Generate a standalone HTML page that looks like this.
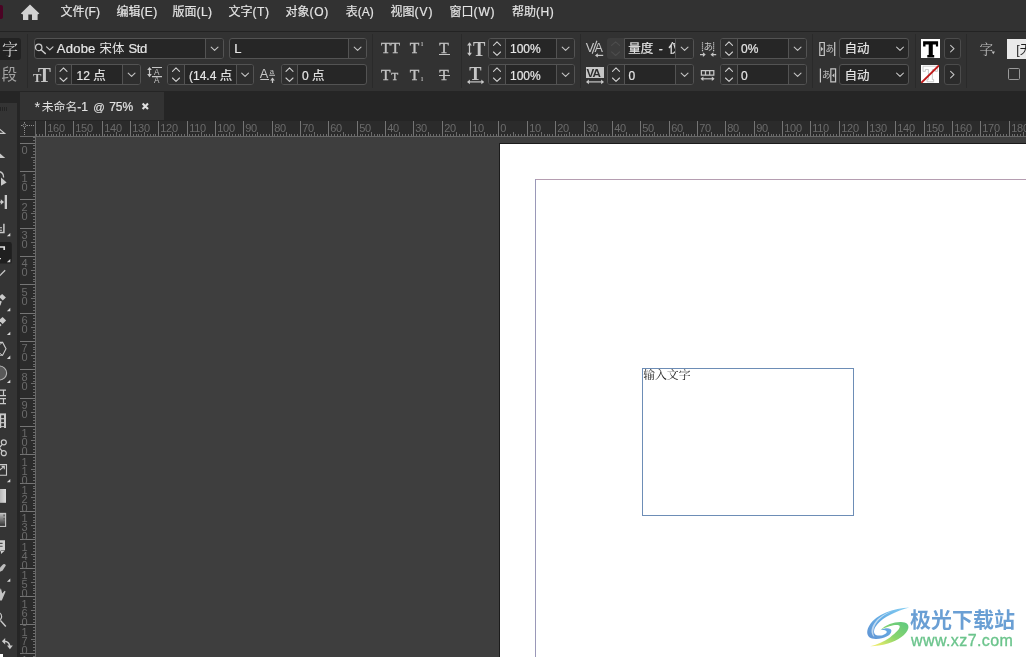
<!DOCTYPE html><html lang="zh"><head><meta charset="utf-8"><title>InDesign</title><style>
*{box-sizing:border-box;margin:0;padding:0}
html,body{width:1026px;height:657px;overflow:hidden;background:#323232}
body{position:relative;font-family:"Liberation Sans","Noto Sans CJK SC",sans-serif;font-size:12px;color:#dcdcdc}
.lb{position:absolute;white-space:nowrap;font-family:"Liberation Sans","Noto Sans CJK SC",sans-serif}
.jp{font-family:"Liberation Sans","Noto Sans CJK JP",sans-serif}
.sf{font-family:"Liberation Serif","Noto Serif CJK SC",serif}
.fld{position:absolute;border:1px solid #535353;border-radius:3px;background:#262626;overflow:hidden}
.fld .st{position:absolute;left:0;top:0;bottom:0;background:#2e2e2e;border-right:1px solid #535353}
.fld .dd{position:absolute;right:0;top:0;bottom:0;background:#2e2e2e;border-left:1px solid #535353}
.vsep{position:absolute;width:1px;background:#2a2a2a;top:34px;height:54px}
svg{display:block}
.lb svg{display:inline-block}
</style></head><body><div id="app" style="position:absolute;left:0;top:0;width:1026px;height:657px;overflow:hidden;will-change:transform"><div class="" style="position:absolute;left:0px;top:0px;width:1026px;height:31px;background:#323232"></div>
<div class="" style="position:absolute;left:0px;top:31px;width:1026px;height:1px;background:#232323"></div>
<div class="" style="position:absolute;left:0px;top:5px;width:3px;height:14px;background:#4b0324;border-radius:0 2px 2px 0"></div>
<svg style="position:absolute;left:20px;top:3px;" width="21" height="19" viewBox="0 0 21 19"><path d="M10 1.6 L19.4 10.6 L17.6 11.6 L17.6 17.1 L12 17.1 L12 11.4 L8.3 11.4 L8.3 17.1 L3 17.1 L3 11.6 L0.8 10.6 Z" fill="#d2d2d2"/></svg>
<div class="lb " style="left:60.5px;top:4.9px;font-size:12px;line-height:14px;color:#e4e4e4;-webkit-text-stroke:0.2px #e4e4e4;">文件<span style="letter-spacing:0.03px">(F)</span></div>
<div class="lb " style="left:116.5px;top:4.9px;font-size:12px;line-height:14px;color:#e4e4e4;-webkit-text-stroke:0.2px #e4e4e4;">编辑<span style="letter-spacing:0.33px">(E)</span></div>
<div class="lb " style="left:172.5px;top:4.9px;font-size:12px;line-height:14px;color:#e4e4e4;-webkit-text-stroke:0.2px #e4e4e4;">版面<span style="letter-spacing:0.44px">(L)</span></div>
<div class="lb " style="left:228.5px;top:4.9px;font-size:12px;line-height:14px;color:#e4e4e4;-webkit-text-stroke:0.2px #e4e4e4;">文字<span style="letter-spacing:0.56px">(T)</span></div>
<div class="lb " style="left:285.5px;top:4.9px;font-size:12px;line-height:14px;color:#e4e4e4;-webkit-text-stroke:0.2px #e4e4e4;">对象<span style="letter-spacing:0.69px">(O)</span></div>
<div class="lb " style="left:345.8px;top:4.9px;font-size:12px;line-height:14px;color:#e4e4e4;-webkit-text-stroke:0.2px #e4e4e4;">表<span style="letter-spacing:0px">(A)</span></div>
<div class="lb " style="left:390.5px;top:4.9px;font-size:12px;line-height:14px;color:#e4e4e4;-webkit-text-stroke:0.2px #e4e4e4;">视图<span style="letter-spacing:1px">(V)</span></div>
<div class="lb " style="left:449.5px;top:4.9px;font-size:12px;line-height:14px;color:#e4e4e4;-webkit-text-stroke:0.2px #e4e4e4;">窗口<span style="letter-spacing:0.89px">(W)</span></div>
<div class="lb " style="left:511.9px;top:4.9px;font-size:12px;line-height:14px;color:#e4e4e4;-webkit-text-stroke:0.2px #e4e4e4;">帮助<span style="letter-spacing:0.61px">(H)</span></div>
<div class="fld" style="left:34px;top:38px;width:190px;height:21px;"><div class="dd" style="width:18px"><svg style="position:absolute;left:0px;top:0px;" width="17" height="19" viewBox="0 0 17 19"><path d="M5.2 8.05 L8.6 11.35 L12 8.05" fill="none" stroke="#c4c4c4" stroke-width="1.1" stroke-linecap="round" stroke-linejoin="round"/></svg></div></div>
<div class="lb " style="left:56.8px;top:41.3px;font-size:13px;line-height:15px;color:#e6e6e6;-webkit-text-stroke:0.2px #e6e6e6;"><span style="letter-spacing:0.24px">Adobe</span></div>
<div class="lb " style="left:99.6px;top:41.3px;font-size:13px;line-height:15px;color:#e6e6e6;"><span style="font-size:12.4px">宋体</span></div>
<div class="lb " style="left:128.5px;top:41.3px;font-size:13px;line-height:15px;color:#e6e6e6;-webkit-text-stroke:0.2px #e6e6e6;"><span style="letter-spacing:-0.44px">Std</span></div>
<div class="fld" style="left:229px;top:38px;width:138px;height:21px;"><div class="dd" style="width:18px"><svg style="position:absolute;left:0px;top:0px;" width="17" height="19" viewBox="0 0 17 19"><path d="M5.2 8.05 L8.6 11.35 L12 8.05" fill="none" stroke="#c4c4c4" stroke-width="1.1" stroke-linecap="round" stroke-linejoin="round"/></svg></div></div><div class="lb " style="left:234.2px;top:41.3px;font-size:13px;line-height:15px;color:#e6e6e6;-webkit-text-stroke:0.2px #e6e6e6;">L</div>
<div class="fld" style="left:488px;top:38px;width:87px;height:21px;"><div class="st" style="width:17px;"><svg style="position:absolute;left:0px;top:0px;" width="16" height="19" viewBox="0 0 16 19"><path d="M4.5 6.3 L8 2.9 L11.5 6.3" fill="none" stroke="#cfcfcf" stroke-width="1.1" stroke-linecap="round" stroke-linejoin="round"/><path d="M4.5 13 L8 16.4 L11.5 13" fill="none" stroke="#cfcfcf" stroke-width="1.1" stroke-linecap="round" stroke-linejoin="round"/></svg></div><div class="dd" style="width:18px"><svg style="position:absolute;left:0px;top:0px;" width="17" height="19" viewBox="0 0 17 19"><path d="M5.2 8.05 L8.6 11.35 L12 8.05" fill="none" stroke="#c4c4c4" stroke-width="1.1" stroke-linecap="round" stroke-linejoin="round"/></svg></div></div><div class="lb " style="left:510px;top:42.3px;font-size:12px;line-height:14px;color:#e6e6e6;-webkit-text-stroke:0.2px #e6e6e6;">100%</div>
<div class="" style="position:absolute;left:607px;top:38px;width:18px;height:21px;background:#3c3c3c;border-radius:3px 0 0 3px"><svg style="position:absolute;left:0px;top:0px;" width="17" height="21" viewBox="0 0 17 21"><path d="M4.6 7.4 L8.6 3.8 L12.6 7.4" fill="none" stroke="#4d4d4d" stroke-width="1.1" stroke-linecap="round" stroke-linejoin="round"/><path d="M4.6 13.9 L8.6 17.5 L12.6 13.9" fill="none" stroke="#4d4d4d" stroke-width="1.1" stroke-linecap="round" stroke-linejoin="round"/></svg></div>
<div class="fld" style="left:624px;top:38px;width:70px;height:21px;border-radius:0 3px 3px 0;"><div class="dd" style="width:18px"><svg style="position:absolute;left:0px;top:0px;" width="17" height="19" viewBox="0 0 17 19"><path d="M5.2 8.05 L8.6 11.35 L12 8.05" fill="none" stroke="#c4c4c4" stroke-width="1.1" stroke-linecap="round" stroke-linejoin="round"/></svg></div></div><div class="lb " style="left:628.3px;top:42.3px;font-size:12px;line-height:14px;color:#e6e6e6;word-spacing:2.2px;width:46.5px;overflow:hidden;-webkit-text-stroke:0.2px #e6e6e6;"><span style="font-size:12.5px">量度</span> - <span style="font-size:12.5px">仅</span></div>
<div class="fld" style="left:720px;top:38px;width:87px;height:21px;"><div class="st" style="width:17px;"><svg style="position:absolute;left:0px;top:0px;" width="16" height="19" viewBox="0 0 16 19"><path d="M4.5 6.3 L8 2.9 L11.5 6.3" fill="none" stroke="#cfcfcf" stroke-width="1.1" stroke-linecap="round" stroke-linejoin="round"/><path d="M4.5 13 L8 16.4 L11.5 13" fill="none" stroke="#cfcfcf" stroke-width="1.1" stroke-linecap="round" stroke-linejoin="round"/></svg></div><div class="dd" style="width:18px"><svg style="position:absolute;left:0px;top:0px;" width="17" height="19" viewBox="0 0 17 19"><path d="M5.2 8.05 L8.6 11.35 L12 8.05" fill="none" stroke="#c4c4c4" stroke-width="1.1" stroke-linecap="round" stroke-linejoin="round"/></svg></div></div><div class="lb " style="left:741px;top:42.3px;font-size:12px;line-height:14px;color:#e6e6e6;-webkit-text-stroke:0.2px #e6e6e6;">0%</div>
<div class="fld" style="left:839px;top:38px;width:70px;height:21px;"><svg style="position:absolute;left:55.5px;top:0px;" width="8" height="19" viewBox="0 0 8 19"><path d="M0.6 8.05 L4 11.35 L7.4 8.05" fill="none" stroke="#c4c4c4" stroke-width="1.1" stroke-linecap="round" stroke-linejoin="round"/></svg></div><div class="lb " style="left:844.5px;top:42.3px;font-size:12px;line-height:14px;color:#e6e6e6;-webkit-text-stroke:0.2px #e6e6e6;"><span style="font-size:12.5px">自动</span></div>
<div class="fld" style="left:55px;top:64px;width:86px;height:21px;"><div class="st" style="width:16px;"><svg style="position:absolute;left:0px;top:0px;" width="15" height="19" viewBox="0 0 15 19"><path d="M4 6.3 L7.5 2.9 L11 6.3" fill="none" stroke="#cfcfcf" stroke-width="1.1" stroke-linecap="round" stroke-linejoin="round"/><path d="M4 13 L7.5 16.4 L11 13" fill="none" stroke="#cfcfcf" stroke-width="1.1" stroke-linecap="round" stroke-linejoin="round"/></svg></div><div class="dd" style="width:18px"><svg style="position:absolute;left:0px;top:0px;" width="17" height="19" viewBox="0 0 17 19"><path d="M5.2 8.05 L8.6 11.35 L12 8.05" fill="none" stroke="#c4c4c4" stroke-width="1.1" stroke-linecap="round" stroke-linejoin="round"/></svg></div></div><div class="lb " style="left:76.5px;top:68.5px;font-size:12px;line-height:14px;color:#e6e6e6;-webkit-text-stroke:0.2px #e6e6e6;">12 <span style="font-size:12.5px">点</span></div>
<div class="fld" style="left:167px;top:64px;width:87px;height:21px;"><div class="st" style="width:17px;"><svg style="position:absolute;left:0px;top:0px;" width="16" height="19" viewBox="0 0 16 19"><path d="M4.5 6.3 L8 2.9 L11.5 6.3" fill="none" stroke="#cfcfcf" stroke-width="1.1" stroke-linecap="round" stroke-linejoin="round"/><path d="M4.5 13 L8 16.4 L11.5 13" fill="none" stroke="#cfcfcf" stroke-width="1.1" stroke-linecap="round" stroke-linejoin="round"/></svg></div><div class="dd" style="width:17px"><svg style="position:absolute;left:0px;top:0px;" width="16" height="19" viewBox="0 0 16 19"><path d="M4.7 8.05 L8.1 11.35 L11.5 8.05" fill="none" stroke="#c4c4c4" stroke-width="1.1" stroke-linecap="round" stroke-linejoin="round"/></svg></div></div><div class="lb " style="left:189px;top:68.5px;font-size:12px;line-height:14px;color:#e6e6e6;width:46px;overflow:hidden;-webkit-text-stroke:0.2px #e6e6e6;">(14.4 <span style="font-size:12.5px">点</span></div>
<div class="fld" style="left:281px;top:64px;width:86px;height:21px;"><div class="st" style="width:16px;"><svg style="position:absolute;left:0px;top:0px;" width="15" height="19" viewBox="0 0 15 19"><path d="M4 6.3 L7.5 2.9 L11 6.3" fill="none" stroke="#cfcfcf" stroke-width="1.1" stroke-linecap="round" stroke-linejoin="round"/><path d="M4 13 L7.5 16.4 L11 13" fill="none" stroke="#cfcfcf" stroke-width="1.1" stroke-linecap="round" stroke-linejoin="round"/></svg></div></div><div class="lb " style="left:302px;top:68.5px;font-size:12px;line-height:14px;color:#e6e6e6;-webkit-text-stroke:0.2px #e6e6e6;">0 <span style="font-size:12.5px">点</span></div>
<div class="fld" style="left:488px;top:64px;width:87px;height:21px;"><div class="st" style="width:17px;"><svg style="position:absolute;left:0px;top:0px;" width="16" height="19" viewBox="0 0 16 19"><path d="M4.5 6.3 L8 2.9 L11.5 6.3" fill="none" stroke="#cfcfcf" stroke-width="1.1" stroke-linecap="round" stroke-linejoin="round"/><path d="M4.5 13 L8 16.4 L11.5 13" fill="none" stroke="#cfcfcf" stroke-width="1.1" stroke-linecap="round" stroke-linejoin="round"/></svg></div><div class="dd" style="width:18px"><svg style="position:absolute;left:0px;top:0px;" width="17" height="19" viewBox="0 0 17 19"><path d="M5.2 8.05 L8.6 11.35 L12 8.05" fill="none" stroke="#c4c4c4" stroke-width="1.1" stroke-linecap="round" stroke-linejoin="round"/></svg></div></div><div class="lb " style="left:510px;top:68.5px;font-size:12px;line-height:14px;color:#e6e6e6;-webkit-text-stroke:0.2px #e6e6e6;">100%</div>
<div class="fld" style="left:607px;top:64px;width:87px;height:21px;"><div class="st" style="width:17px;"><svg style="position:absolute;left:0px;top:0px;" width="16" height="19" viewBox="0 0 16 19"><path d="M4.5 6.3 L8 2.9 L11.5 6.3" fill="none" stroke="#cfcfcf" stroke-width="1.1" stroke-linecap="round" stroke-linejoin="round"/><path d="M4.5 13 L8 16.4 L11.5 13" fill="none" stroke="#cfcfcf" stroke-width="1.1" stroke-linecap="round" stroke-linejoin="round"/></svg></div><div class="dd" style="width:18px"><svg style="position:absolute;left:0px;top:0px;" width="17" height="19" viewBox="0 0 17 19"><path d="M5.2 8.05 L8.6 11.35 L12 8.05" fill="none" stroke="#c4c4c4" stroke-width="1.1" stroke-linecap="round" stroke-linejoin="round"/></svg></div></div><div class="lb " style="left:628.5px;top:68.5px;font-size:12px;line-height:14px;color:#e6e6e6;-webkit-text-stroke:0.2px #e6e6e6;">0</div>
<div class="fld" style="left:720px;top:64px;width:87px;height:21px;"><div class="st" style="width:17px;"><svg style="position:absolute;left:0px;top:0px;" width="16" height="19" viewBox="0 0 16 19"><path d="M4.5 6.3 L8 2.9 L11.5 6.3" fill="none" stroke="#cfcfcf" stroke-width="1.1" stroke-linecap="round" stroke-linejoin="round"/><path d="M4.5 13 L8 16.4 L11.5 13" fill="none" stroke="#cfcfcf" stroke-width="1.1" stroke-linecap="round" stroke-linejoin="round"/></svg></div><div class="dd" style="width:18px"><svg style="position:absolute;left:0px;top:0px;" width="17" height="19" viewBox="0 0 17 19"><path d="M5.2 8.05 L8.6 11.35 L12 8.05" fill="none" stroke="#c4c4c4" stroke-width="1.1" stroke-linecap="round" stroke-linejoin="round"/></svg></div></div><div class="lb " style="left:741px;top:68.5px;font-size:12px;line-height:14px;color:#e6e6e6;-webkit-text-stroke:0.2px #e6e6e6;">0</div>
<div class="fld" style="left:839px;top:64px;width:70px;height:21px;"><svg style="position:absolute;left:55.5px;top:0px;" width="8" height="19" viewBox="0 0 8 19"><path d="M0.6 8.05 L4 11.35 L7.4 8.05" fill="none" stroke="#c4c4c4" stroke-width="1.1" stroke-linecap="round" stroke-linejoin="round"/></svg></div><div class="lb " style="left:844.5px;top:68.5px;font-size:12px;line-height:14px;color:#e6e6e6;-webkit-text-stroke:0.2px #e6e6e6;"><span style="font-size:12.5px">自动</span></div>
<div class="vsep" style="left:27px"></div>
<div class="vsep" style="left:372px"></div>
<div class="vsep" style="left:461px"></div>
<div class="vsep" style="left:580px"></div>
<div class="vsep" style="left:812px"></div>
<div class="vsep" style="left:915px"></div>
<div class="vsep" style="left:966px"></div>
<div class="" style="position:absolute;left:0px;top:38px;width:21px;height:22px;background:#222;border-radius:0 3px 3px 0"></div>
<div class="lb sf" style="left:1.9px;top:40.9px;font-size:16px;line-height:17px;color:#d4d4d4;">字</div>
<div class="lb " style="left:1.5px;top:65.6px;font-size:15.6px;line-height:17px;color:#a2a2a2;">段</div>
<svg style="position:absolute;left:34px;top:38px;" width="22" height="21" viewBox="0 0 22 21"><circle cx="4.7" cy="9.4" r="3.2" fill="none" stroke="#c8c8c8" stroke-width="1.3"/><path d="M7 11.8 L11.4 15.6" stroke="#c8c8c8" stroke-width="1.4" stroke-linecap="round"/><path d="M12.6 8.9 L15.8 11.9 L19 8.9" fill="none" stroke="#c8c8c8" stroke-width="1.2" stroke-linecap="round" stroke-linejoin="round"/></svg>
<div class="lb" style="left:33px;top:71px;font-size:12.6px;line-height:14px;color:#c6c6c6;font-family:'Liberation Serif',serif;font-weight:bold;">T</div>
<div class="lb" style="left:38px;top:63px;font-size:21.4px;line-height:24px;color:#c6c6c6;font-family:'Liberation Serif',serif;font-weight:bold;transform:scaleX(0.9);transform-origin:0 0;">T</div>
<svg style="position:absolute;left:146px;top:65px;" width="18" height="20" viewBox="0 0 18 20"><path d="M3.5 2.9 V11.2" stroke="#c6c6c6" stroke-width="1.2" fill="none"/><path d="M3.5 1.9 l-2.3 3.1 h4.6 z" fill="#c6c6c6"/><path d="M3.5 12.2 l-2.3 -3.1 h4.6 z" fill="#c6c6c6"/><path d="M6 2.5H16M6 11.6H16" stroke="#c6c6c6" stroke-width="1.1"/></svg>
<div class="lb " style="left:153.9px;top:67.9px;font-size:8.2px;line-height:9px;color:#c6c6c6;">A</div>
<div class="lb " style="left:153.9px;top:76.1px;font-size:8.2px;line-height:9px;color:#c6c6c6;">A</div>
<div class="lb " style="left:259.8px;top:65.8px;font-size:12.8px;line-height:15px;color:#c6c6c6;">A</div>
<div class="lb " style="left:269.8px;top:66.5px;font-size:7.6px;line-height:9px;color:#c6c6c6;">a</div>
<svg style="position:absolute;left:258px;top:65px;" width="20" height="20" viewBox="0 0 20 20"><path d="M2.3 14.5H11M11.3 10.3H17" stroke="#c6c6c6" stroke-width="1.1"/><path d="M14.5 13.4 V18" stroke="#c6c6c6" stroke-width="1.2" fill="none"/><path d="M14.5 12.4 l-2.3 3.1 h4.6 z" fill="#c6c6c6"/></svg>
<div class="lb" style="left:381px;top:39.1px;font-size:15.6px;line-height:17px;color:#c2c2c2;font-family:'Liberation Serif',serif;font-weight:normal;-webkit-text-stroke:0.35px #c2c2c2;">TT</div>
<div class="lb" style="left:409.8px;top:39.1px;font-size:15.6px;line-height:17px;color:#c2c2c2;font-family:'Liberation Serif',serif;font-weight:normal;-webkit-text-stroke:0.35px #c2c2c2;">T</div>
<div class="lb" style="left:420.8px;top:40.9px;font-size:5.2px;line-height:6px;color:#c2c2c2;font-family:'Liberation Serif',serif;font-weight:bold;">1</div>
<div class="lb" style="left:439.2px;top:39.1px;font-size:15.6px;line-height:17px;color:#c2c2c2;font-family:'Liberation Serif',serif;font-weight:normal;-webkit-text-stroke:0.35px #c2c2c2;">T</div>
<div class="" style="position:absolute;left:439px;top:54px;width:11px;height:1.2px;background:#c2c2c2"></div>
<div class="lb" style="left:381px;top:66px;font-size:15.6px;line-height:17px;color:#c2c2c2;font-family:'Liberation Serif',serif;font-weight:normal;-webkit-text-stroke:0.35px #c2c2c2;">T</div>
<div class="lb" style="left:391.2px;top:70px;font-size:11.4px;line-height:12px;color:#c2c2c2;font-family:'Liberation Serif',serif;font-weight:normal;-webkit-text-stroke:0.35px #c2c2c2;">T</div>
<div class="lb" style="left:409.8px;top:66px;font-size:15.6px;line-height:17px;color:#c2c2c2;font-family:'Liberation Serif',serif;font-weight:normal;-webkit-text-stroke:0.35px #c2c2c2;">T</div>
<div class="lb" style="left:420.8px;top:76.2px;font-size:5.2px;line-height:6px;color:#c2c2c2;font-family:'Liberation Serif',serif;font-weight:bold;">1</div>
<div class="lb" style="left:439.2px;top:66px;font-size:15.6px;line-height:17px;color:#c2c2c2;font-family:'Liberation Serif',serif;font-weight:normal;-webkit-text-stroke:0.35px #c2c2c2;">T</div>
<div class="" style="position:absolute;left:438.6px;top:74.5px;width:11.4px;height:1.2px;background:#c2c2c2"></div>
<svg style="position:absolute;left:465px;top:40px;" width="10" height="18" viewBox="0 0 10 18"><path d="M4.5 3.2 V15" stroke="#c6c6c6" stroke-width="1.2" fill="none"/><path d="M4.5 2.2 l-2.4 3.2 h4.8 z" fill="#c6c6c6"/><path d="M4.5 16 l-2.4 -3.2 h4.8 z" fill="#c6c6c6"/></svg>
<div class="lb" style="left:472.8px;top:38px;font-size:20.6px;line-height:22px;color:#c6c6c6;font-family:'Liberation Serif',serif;font-weight:bold;transform:scaleX(0.9);transform-origin:0 0;">T</div>
<div class="lb" style="left:469.2px;top:63.6px;font-size:18.4px;line-height:20px;color:#c6c6c6;font-family:'Liberation Serif',serif;font-weight:bold;">T</div>
<svg style="position:absolute;left:465px;top:78px;" width="22" height="8" viewBox="0 0 22 8"><path d="M3 3.9 H18.2" stroke="#c6c6c6" stroke-width="1.2" fill="none"/><path d="M2 3.9 l2.9 -2.3 v4.6 z" fill="#c6c6c6"/><path d="M19.2 3.9 l-2.9 -2.3 v4.6 z" fill="#c6c6c6"/></svg>
<div class="lb " style="left:585.8px;top:40.6px;font-size:12.6px;line-height:14px;color:#c6c6c6;">V</div>
<div class="lb " style="left:594.6px;top:40.6px;font-size:12.6px;line-height:14px;color:#c6c6c6;">A</div>
<svg style="position:absolute;left:584px;top:38px;" width="22" height="22" viewBox="0 0 22 22"><path d="M12.9 2.8 L8.2 15.8" stroke="#c6c6c6" stroke-width="1.1"/><path d="M12 17.4 H19.2" stroke="#c6c6c6" stroke-width="1.2" fill="none"/><path d="M11 17.4 l2.8 -2.2 v4.4 z" fill="#c6c6c6"/></svg>
<div class="" style="position:absolute;left:586px;top:67px;width:18px;height:10.6px;background:#c6c6c6"></div>
<div class="lb " style="left:586.6px;top:66.9px;font-size:11.6px;line-height:12px;color:#2c2c2c;font-weight:bold;letter-spacing:-0.9px">VA</div>
<svg style="position:absolute;left:584px;top:78px;" width="22" height="8" viewBox="0 0 22 8"><path d="M3 3.9 H19" stroke="#c6c6c6" stroke-width="1.2" fill="none"/><path d="M2 3.9 l2.9 -2.3 v4.6 z" fill="#c6c6c6"/><path d="M20 3.9 l-2.9 -2.3 v4.6 z" fill="#c6c6c6"/></svg>
<div class="lb jp" style="left:703.6px;top:41.3px;font-size:9.6px;line-height:11px;color:#c6c6c6;">あ</div>
<svg style="position:absolute;left:698px;top:38px;" width="20" height="22" viewBox="0 0 20 22"><path d="M3.9 4.3h1.2v1.2h-1.2zM3.9 6.25h1.2v1.2h-1.2zM3.9 8.2h1.2v1.2h-1.2zM3.9 10.15h1.2v1.2h-1.2zM3.9 12.1h1.2v1.2h-1.2zM15 4.3h1.2v1.2h-1.2zM15 6.25h1.2v1.2h-1.2zM15 8.2h1.2v1.2h-1.2zM15 10.15h1.2v1.2h-1.2zM15 12.1h1.2v1.2h-1.2z" fill="#c6c6c6"/><path d="M2 16.6H6.4M12.9 16.6H18.2" stroke="#c6c6c6" stroke-width="1.2"/><path d="M7.7 16.6 L4.9 14.3 V18.9Z M12.6 16.6 L15.4 14.3 V18.9Z" fill="#c6c6c6"/></svg>
<svg style="position:absolute;left:698px;top:65px;" width="20" height="20" viewBox="0 0 20 20"><path d="M3.4 5.5H15.8V10H3.4ZM7.5 5.5V10M11.7 5.5V10" fill="none" stroke="#c6c6c6" stroke-width="1.25"/><path d="M3.6 13.8 H15.6" stroke="#c6c6c6" stroke-width="1.2" fill="none"/><path d="M2.6 13.8 l2.8 -2.2 v4.4 z" fill="#c6c6c6"/><path d="M16.6 13.8 l-2.8 -2.2 v4.4 z" fill="#c6c6c6"/></svg>
<svg style="position:absolute;left:817px;top:38px;" width="20" height="22" viewBox="0 0 20 22"><path d="M2.8 4.5H7.3V17.5H2.8Z" fill="none" stroke="#c6c6c6" stroke-width="1.2"/><path d="M4 8.8 L6.3 11 L4 13.2Z" fill="#c6c6c6"/><path d="M17.7 4V18" stroke="#c6c6c6" stroke-width="1.2"/></svg>
<div class="lb jp" style="left:825.6px;top:44.1px;font-size:8.6px;line-height:10px;color:#c6c6c6;">あ</div>
<svg style="position:absolute;left:817px;top:65px;" width="20" height="20" viewBox="0 0 20 20"><path d="M13.8 3.9H18.6V16.9H13.8Z" fill="none" stroke="#c6c6c6" stroke-width="1.2"/><path d="M17.4 8.2 L15.1 10.4 L17.4 12.6Z" fill="#c6c6c6"/><path d="M3.4 3.4V17.4" stroke="#c6c6c6" stroke-width="1.2"/></svg>
<div class="lb jp" style="left:821.9px;top:70.3px;font-size:8.6px;line-height:10px;color:#c6c6c6;">あ</div>
<div class="" style="position:absolute;left:921px;top:39px;width:19px;height:19px;background:#fff"></div>
<svg style="position:absolute;left:921px;top:39px;" width="19" height="19" viewBox="0 0 19 19"><path d="M2.1 2.2 L17.1 2.2 L17.1 7.6 L14.9 7.6 L14.9 5.6 L11.8 5.6 L11.8 16 L13.2 16 L13.2 18.4 L6.3 18.4 L6.3 16 L7.7 16 L7.7 5.6 L4.5 5.6 L4.5 7.6 L2.1 7.6Z" fill="#000"/></svg>
<div class="fld" style="left:944px;top:38px;width:17px;height:21px;background:#2b2b2b;border-color:#4c4c4c"><svg style="position:absolute;left:0px;top:0px;" width="15" height="19" viewBox="0 0 15 19"><path d="M5.6 6.3 L9 9.6 L5.6 12.9" fill="none" stroke="#c4c4c4" stroke-width="1.1" stroke-linecap="round" stroke-linejoin="round"/></svg></div>
<div class="" style="position:absolute;left:921px;top:65px;width:18.4px;height:18px;background:#fff"></div>
<svg style="position:absolute;left:921px;top:65px;" width="18.4" height="18" viewBox="0 0 18.4 18"><path d="M2.02 1.21 L16.42 1.21 L16.42 6.4 L14.3 6.4 L14.3 4.48 L11.33 4.48 L11.33 14.46 L12.67 14.46 L12.67 16.76 L6.05 16.76 L6.05 14.46 L7.39 14.46 L7.39 4.48 L4.32 4.48 L4.32 6.4 L2.02 6.4Z" fill="#fff" stroke="#c4c4c4" stroke-width="0.9"/><path d="M0.2 17.9 L18.3 0.1" stroke="#bf1a1a" stroke-width="1.9"/></svg>
<div class="fld" style="left:944px;top:64px;width:17px;height:21px;background:#2b2b2b;border-color:#4c4c4c"><svg style="position:absolute;left:0px;top:0px;" width="15" height="19" viewBox="0 0 15 19"><path d="M5.6 6.3 L9 9.6 L5.6 12.9" fill="none" stroke="#c4c4c4" stroke-width="1.1" stroke-linecap="round" stroke-linejoin="round"/></svg></div>
<div class="lb sf" style="left:979.6px;top:41.6px;font-size:13.6px;line-height:15px;color:#bdbdbd;">字</div>
<svg style="position:absolute;left:991px;top:51px;" width="5" height="4" viewBox="0 0 5 4"><path d="M0.6 0.6H4L2.3 3.2Z" fill="#bdbdbd"/></svg>
<div class="" style="position:absolute;left:1007px;top:39px;width:19px;height:19.5px;background:#e9e9e9;overflow:hidden"></div>
<div class="lb " style="left:1016.2px;top:43px;font-size:12.5px;line-height:14px;color:#1c1c1c;width:12px;overflow:hidden">[无</div>
<div class="" style="position:absolute;left:1008px;top:68px;width:12px;height:12px;border:1.2px solid #9a9a9a;border-radius:1.5px"></div>
<div class="" style="position:absolute;left:0px;top:91px;width:1026px;height:30px;background:#252525"></div>
<div class="" style="position:absolute;left:20px;top:92px;width:144px;height:28px;background:#333"></div>
<div class="lb " style="left:34.6px;top:99.1px;font-size:14.5px;line-height:16px;color:#e6e6e6;">*</div>
<div class="lb " style="left:41.8px;top:99.5px;font-size:11.8px;line-height:14px;color:#e2e2e2;">未命名</div>
<div class="lb " style="left:77.2px;top:99.5px;font-size:12px;line-height:14px;color:#e2e2e2;-webkit-text-stroke:0.2px #e2e2e2;">-1</div>
<div class="lb " style="left:93.2px;top:100.5px;font-size:11.4px;line-height:12px;color:#e2e2e2;-webkit-text-stroke:0.15px #e2e2e2;">@</div>
<div class="lb " style="left:109.2px;top:99.5px;font-size:12px;line-height:14px;color:#e2e2e2;-webkit-text-stroke:0.2px #e2e2e2;">75%</div>
<svg style="position:absolute;left:141px;top:102px;" width="9" height="9" viewBox="0 0 9 9"><path d="M1.6 1.6 L7 7 M7 1.6 L1.6 7" stroke="#e0e0e0" stroke-width="2.1" stroke-linecap="butt"/></svg>
<div class="" style="position:absolute;left:0px;top:103px;width:17px;height:554px;background:#343434"></div>
<div class="" style="position:absolute;left:17px;top:91px;width:3px;height:566px;background:#252525"></div>
<svg style="position:absolute;left:0px;top:107px;" width="8" height="5" viewBox="0 0 8 5"><path d="M0.5 0V4M2.5 0V4M4.5 0V4M6.5 0V4" stroke="#242424" stroke-width="1" shape-rendering="crispEdges"/></svg>
<div class="" style="position:absolute;left:20px;top:121px;width:1006px;height:15px;background:#2b2b2b"></div>
<div class="" style="position:absolute;left:20px;top:136px;width:16px;height:521px;background:#2b2b2b"></div>
<div class="" style="position:absolute;left:36px;top:137px;width:990px;height:520px;background:#3e3e3e"></div>
<svg style="position:absolute;left:20px;top:121px;shape-rendering:crispEdges" width="1006" height="536" viewBox="0 0 1006 536"><path d="M16.5 13V15M19.5 13V15M22.5 13V15M28.5 13V15M31.5 13V15M33.5 13V15M36.5 13V15M42.5 13V15M45.5 13V15M48.5 13V15M50.5 13V15M56.5 13V15M59.5 13V15M62.5 13V15M65.5 13V15M70.5 13V15M73.5 13V15M76.5 13V15M79.5 13V15M84.5 13V15M87.5 13V15M90.5 13V15M93.5 13V15M99.5 13V15M101.5 13V15M104.5 13V15M107.5 13V15M113.5 13V15M116.5 13V15M118.5 13V15M121.5 13V15M127.5 13V15M130.5 13V15M133.5 13V15M135.5 13V15M141.5 13V15M144.5 13V15M147.5 13V15M150.5 13V15M155.5 13V15M158.5 13V15M161.5 13V15M164.5 13V15M169.5 13V15M172.5 13V15M175.5 13V15M178.5 13V15M184.5 13V15M186.5 13V15M189.5 13V15M192.5 13V15M198.5 13V15M201.5 13V15M203.5 13V15M206.5 13V15M212.5 13V15M215.5 13V15M218.5 13V15M220.5 13V15M226.5 13V15M229.5 13V15M232.5 13V15M235.5 13V15M240.5 13V15M243.5 13V15M246.5 13V15M249.5 13V15M254.5 13V15M257.5 13V15M260.5 13V15M263.5 13V15M269.5 13V15M271.5 13V15M274.5 13V15M277.5 13V15M283.5 13V15M286.5 13V15M289.5 13V15M291.5 13V15M297.5 13V15M300.5 13V15M303.5 13V15M306.5 13V15M311.5 13V15M314.5 13V15M317.5 13V15M320.5 13V15M325.5 13V15M328.5 13V15M331.5 13V15M334.5 13V15M340.5 13V15M342.5 13V15M345.5 13V15M348.5 13V15M354.5 13V15M357.5 13V15M359.5 13V15M362.5 13V15M368.5 13V15M371.5 13V15M374.5 13V15M376.5 13V15M382.5 13V15M385.5 13V15M388.5 13V15M391.5 13V15M396.5 13V15M399.5 13V15M402.5 13V15M405.5 13V15M410.5 13V15M413.5 13V15M416.5 13V15M419.5 13V15M425.5 13V15M427.5 13V15M430.5 13V15M433.5 13V15M439.5 13V15M442.5 13V15M444.5 13V15M447.5 13V15M453.5 13V15M456.5 13V15M459.5 13V15M461.5 13V15M467.5 13V15M470.5 13V15M473.5 13V15M476.5 13V15M481.5 13V15M484.5 13V15M487.5 13V15M490.5 13V15M495.5 13V15M498.5 13V15M501.5 13V15M504.5 13V15M510.5 13V15M512.5 13V15M515.5 13V15M518.5 13V15M524.5 13V15M527.5 13V15M529.5 13V15M532.5 13V15M538.5 13V15M541.5 13V15M544.5 13V15M546.5 13V15M552.5 13V15M555.5 13V15M558.5 13V15M561.5 13V15M566.5 13V15M569.5 13V15M572.5 13V15M575.5 13V15M581.5 13V15M583.5 13V15M586.5 13V15M589.5 13V15M595.5 13V15M598.5 13V15M600.5 13V15M603.5 13V15M609.5 13V15M612.5 13V15M615.5 13V15M617.5 13V15M623.5 13V15M626.5 13V15M629.5 13V15M632.5 13V15M637.5 13V15M640.5 13V15M643.5 13V15M646.5 13V15M651.5 13V15M654.5 13V15M657.5 13V15M660.5 13V15M666.5 13V15M668.5 13V15M671.5 13V15M674.5 13V15M680.5 13V15M683.5 13V15M685.5 13V15M688.5 13V15M694.5 13V15M697.5 13V15M700.5 13V15M702.5 13V15M708.5 13V15M711.5 13V15M714.5 13V15M717.5 13V15M722.5 13V15M725.5 13V15M728.5 13V15M731.5 13V15M736.5 13V15M739.5 13V15M742.5 13V15M745.5 13V15M751.5 13V15M753.5 13V15M756.5 13V15M759.5 13V15M765.5 13V15M768.5 13V15M770.5 13V15M773.5 13V15M779.5 13V15M782.5 13V15M785.5 13V15M787.5 13V15M793.5 13V15M796.5 13V15M799.5 13V15M802.5 13V15M807.5 13V15M810.5 13V15M813.5 13V15M816.5 13V15M821.5 13V15M824.5 13V15M827.5 13V15M830.5 13V15M836.5 13V15M838.5 13V15M841.5 13V15M844.5 13V15M850.5 13V15M853.5 13V15M856.5 13V15M858.5 13V15M864.5 13V15M867.5 13V15M870.5 13V15M873.5 13V15M878.5 13V15M881.5 13V15M884.5 13V15M887.5 13V15M892.5 13V15M895.5 13V15M898.5 13V15M901.5 13V15M907.5 13V15M909.5 13V15M912.5 13V15M915.5 13V15M921.5 13V15M924.5 13V15M926.5 13V15M929.5 13V15M935.5 13V15M938.5 13V15M941.5 13V15M943.5 13V15M949.5 13V15M952.5 13V15M955.5 13V15M958.5 13V15M963.5 13V15M966.5 13V15M969.5 13V15M972.5 13V15M977.5 13V15M980.5 13V15M983.5 13V15M986.5 13V15M992.5 13V15M994.5 13V15M997.5 13V15M1000.5 13V15M39.5 11V15M67.5 11V15M96.5 11V15M124.5 11V15M152.5 11V15M181.5 11V15M209.5 11V15M237.5 11V15M266.5 11V15M294.5 11V15M323.5 11V15M351.5 11V15M379.5 11V15M408.5 11V15M436.5 11V15M464.5 11V15M493.5 11V15M521.5 11V15M549.5 11V15M578.5 11V15M606.5 11V15M634.5 11V15M663.5 11V15M691.5 11V15M719.5 11V15M748.5 11V15M776.5 11V15M804.5 11V15M833.5 11V15M861.5 11V15M890.5 11V15M918.5 11V15M946.5 11V15M975.5 11V15M1003.5 11V15" stroke="#6c6c6c" stroke-width="1"/><path d="M25.5 0V15M53.5 0V15M82.5 0V15M110.5 0V15M138.5 0V15M167.5 0V15M195.5 0V15M223.5 0V15M252.5 0V15M280.5 0V15M308.5 0V15M337.5 0V15M365.5 0V15M393.5 0V15M422.5 0V15M450.5 0V15M478.5 0V15M507.5 0V15M535.5 0V15M564.5 0V15M592.5 0V15M620.5 0V15M649.5 0V15M677.5 0V15M705.5 0V15M734.5 0V15M762.5 0V15M790.5 0V15M819.5 0V15M847.5 0V15M875.5 0V15M904.5 0V15M932.5 0V15M960.5 0V15M989.5 0V15" stroke="#757575" stroke-width="1"/><path d="M0 15.5H1006" stroke="#686868" stroke-width="1"/><path d="M15.5 0V536" stroke="#686868" stroke-width="1"/><path d="M13 16.5H15M13 19.5H15M13 24.5H15M13 27.5H15M13 30.5H15M13 33.5H15M11 36.5H15M13 39.5H15M13 41.5H15M13 44.5H15M13 47.5H15M13 53.5H15M13 56.5H15M13 58.5H15M13 61.5H15M11 64.5H15M13 67.5H15M13 70.5H15M13 73.5H15M13 75.5H15M13 81.5H15M13 84.5H15M13 87.5H15M13 90.5H15M11 92.5H15M13 95.5H15M13 98.5H15M13 101.5H15M13 104.5H15M13 109.5H15M13 112.5H15M13 115.5H15M13 118.5H15M11 121.5H15M13 124.5H15M13 126.5H15M13 129.5H15M13 132.5H15M13 138.5H15M13 141.5H15M13 143.5H15M13 146.5H15M11 149.5H15M13 152.5H15M13 155.5H15M13 158.5H15M13 160.5H15M13 166.5H15M13 169.5H15M13 172.5H15M13 175.5H15M11 177.5H15M13 180.5H15M13 183.5H15M13 186.5H15M13 189.5H15M13 194.5H15M13 197.5H15M13 200.5H15M13 203.5H15M11 206.5H15M13 209.5H15M13 211.5H15M13 214.5H15M13 217.5H15M13 223.5H15M13 226.5H15M13 228.5H15M13 231.5H15M11 234.5H15M13 237.5H15M13 240.5H15M13 243.5H15M13 245.5H15M13 251.5H15M13 254.5H15M13 257.5H15M13 260.5H15M11 262.5H15M13 265.5H15M13 268.5H15M13 271.5H15M13 274.5H15M13 279.5H15M13 282.5H15M13 285.5H15M13 288.5H15M11 291.5H15M13 294.5H15M13 296.5H15M13 299.5H15M13 302.5H15M13 308.5H15M13 311.5H15M13 314.5H15M13 316.5H15M11 319.5H15M13 322.5H15M13 325.5H15M13 328.5H15M13 331.5H15M13 336.5H15M13 339.5H15M13 342.5H15M13 345.5H15M11 348.5H15M13 350.5H15M13 353.5H15M13 356.5H15M13 359.5H15M13 365.5H15M13 367.5H15M13 370.5H15M13 373.5H15M11 376.5H15M13 379.5H15M13 382.5H15M13 384.5H15M13 387.5H15M13 393.5H15M13 396.5H15M13 399.5H15M13 401.5H15M11 404.5H15M13 407.5H15M13 410.5H15M13 413.5H15M13 416.5H15M13 421.5H15M13 424.5H15M13 427.5H15M13 430.5H15M11 433.5H15M13 435.5H15M13 438.5H15M13 441.5H15M13 444.5H15M13 450.5H15M13 452.5H15M13 455.5H15M13 458.5H15M11 461.5H15M13 464.5H15M13 467.5H15M13 469.5H15M13 472.5H15M13 478.5H15M13 481.5H15M13 484.5H15M13 486.5H15M11 489.5H15M13 492.5H15M13 495.5H15M13 498.5H15M13 501.5H15M13 506.5H15M13 509.5H15M13 512.5H15M13 515.5H15M11 518.5H15M13 520.5H15M13 523.5H15M13 526.5H15M13 529.5H15M13 535.5H15" stroke="#6c6c6c" stroke-width="1"/><path d="M0 22.5H15M0 50.5H15M0 78.5H15M0 107.5H15M0 135.5H15M0 163.5H15M0 192.5H15M0 220.5H15M0 248.5H15M0 277.5H15M0 305.5H15M0 333.5H15M0 362.5H15M0 390.5H15M0 418.5H15M0 447.5H15M0 475.5H15M0 503.5H15M0 532.5H15" stroke="#757575" stroke-width="1"/><path d="M1 4h1v1h-1zM7 4h1v1h-1zM9 4h1v1h-1zM11 4h1v1h-1zM13 4h1v1h-1zM4 1h1v1h-1zM4 7h1v1h-1zM4 9h1v1h-1zM4 11h1v1h-1zM4 13h1v1h-1z" fill="#8e8e8e"/><path d="M4.5 2.6L6.4 4.5L4.5 6.4L2.6 4.5Z" fill="none" stroke="#8e8e8e" stroke-width="0.9" shape-rendering="geometricPrecision"/></svg>
<div class="lb " style="left:47.2px;top:122px;font-size:11px;line-height:12px;color:#6b6b6b;"><span style="letter-spacing:-0.25px">160</span></div>
<div class="lb " style="left:75.2px;top:122px;font-size:11px;line-height:12px;color:#6b6b6b;"><span style="letter-spacing:-0.25px">150</span></div>
<div class="lb " style="left:104.2px;top:122px;font-size:11px;line-height:12px;color:#6b6b6b;"><span style="letter-spacing:-0.25px">140</span></div>
<div class="lb " style="left:132.2px;top:122px;font-size:11px;line-height:12px;color:#6b6b6b;"><span style="letter-spacing:-0.25px">130</span></div>
<div class="lb " style="left:160.2px;top:122px;font-size:11px;line-height:12px;color:#6b6b6b;"><span style="letter-spacing:-0.25px">120</span></div>
<div class="lb " style="left:189.2px;top:122px;font-size:11px;line-height:12px;color:#6b6b6b;"><span style="letter-spacing:-0.25px">110</span></div>
<div class="lb " style="left:217.2px;top:122px;font-size:11px;line-height:12px;color:#6b6b6b;"><span style="letter-spacing:-0.25px">100</span></div>
<div class="lb " style="left:245.2px;top:122px;font-size:11px;line-height:12px;color:#6b6b6b;"><span style="letter-spacing:-0.25px">90</span></div>
<div class="lb " style="left:274.2px;top:122px;font-size:11px;line-height:12px;color:#6b6b6b;"><span style="letter-spacing:-0.25px">80</span></div>
<div class="lb " style="left:302.2px;top:122px;font-size:11px;line-height:12px;color:#6b6b6b;"><span style="letter-spacing:-0.25px">70</span></div>
<div class="lb " style="left:330.2px;top:122px;font-size:11px;line-height:12px;color:#6b6b6b;"><span style="letter-spacing:-0.25px">60</span></div>
<div class="lb " style="left:359.2px;top:122px;font-size:11px;line-height:12px;color:#6b6b6b;"><span style="letter-spacing:-0.25px">50</span></div>
<div class="lb " style="left:387.2px;top:122px;font-size:11px;line-height:12px;color:#6b6b6b;"><span style="letter-spacing:-0.25px">40</span></div>
<div class="lb " style="left:415.2px;top:122px;font-size:11px;line-height:12px;color:#6b6b6b;"><span style="letter-spacing:-0.25px">30</span></div>
<div class="lb " style="left:444.2px;top:122px;font-size:11px;line-height:12px;color:#6b6b6b;"><span style="letter-spacing:-0.25px">20</span></div>
<div class="lb " style="left:472.2px;top:122px;font-size:11px;line-height:12px;color:#6b6b6b;"><span style="letter-spacing:-0.25px">10</span></div>
<div class="lb " style="left:500.2px;top:122px;font-size:11px;line-height:12px;color:#6b6b6b;"><span style="letter-spacing:-0.25px">0</span></div>
<div class="lb " style="left:529.2px;top:122px;font-size:11px;line-height:12px;color:#6b6b6b;"><span style="letter-spacing:-0.25px">10</span></div>
<div class="lb " style="left:557.2px;top:122px;font-size:11px;line-height:12px;color:#6b6b6b;"><span style="letter-spacing:-0.25px">20</span></div>
<div class="lb " style="left:586.2px;top:122px;font-size:11px;line-height:12px;color:#6b6b6b;"><span style="letter-spacing:-0.25px">30</span></div>
<div class="lb " style="left:614.2px;top:122px;font-size:11px;line-height:12px;color:#6b6b6b;"><span style="letter-spacing:-0.25px">40</span></div>
<div class="lb " style="left:642.2px;top:122px;font-size:11px;line-height:12px;color:#6b6b6b;"><span style="letter-spacing:-0.25px">50</span></div>
<div class="lb " style="left:671.2px;top:122px;font-size:11px;line-height:12px;color:#6b6b6b;"><span style="letter-spacing:-0.25px">60</span></div>
<div class="lb " style="left:699.2px;top:122px;font-size:11px;line-height:12px;color:#6b6b6b;"><span style="letter-spacing:-0.25px">70</span></div>
<div class="lb " style="left:727.2px;top:122px;font-size:11px;line-height:12px;color:#6b6b6b;"><span style="letter-spacing:-0.25px">80</span></div>
<div class="lb " style="left:756.2px;top:122px;font-size:11px;line-height:12px;color:#6b6b6b;"><span style="letter-spacing:-0.25px">90</span></div>
<div class="lb " style="left:784.2px;top:122px;font-size:11px;line-height:12px;color:#6b6b6b;"><span style="letter-spacing:-0.25px">100</span></div>
<div class="lb " style="left:812.2px;top:122px;font-size:11px;line-height:12px;color:#6b6b6b;"><span style="letter-spacing:-0.25px">110</span></div>
<div class="lb " style="left:841.2px;top:122px;font-size:11px;line-height:12px;color:#6b6b6b;"><span style="letter-spacing:-0.25px">120</span></div>
<div class="lb " style="left:869.2px;top:122px;font-size:11px;line-height:12px;color:#6b6b6b;"><span style="letter-spacing:-0.25px">130</span></div>
<div class="lb " style="left:897.2px;top:122px;font-size:11px;line-height:12px;color:#6b6b6b;"><span style="letter-spacing:-0.25px">140</span></div>
<div class="lb " style="left:926.2px;top:122px;font-size:11px;line-height:12px;color:#6b6b6b;"><span style="letter-spacing:-0.25px">150</span></div>
<div class="lb " style="left:954.2px;top:122px;font-size:11px;line-height:12px;color:#6b6b6b;"><span style="letter-spacing:-0.25px">160</span></div>
<div class="lb " style="left:982.2px;top:122px;font-size:11px;line-height:12px;color:#6b6b6b;"><span style="letter-spacing:-0.25px">170</span></div>
<div class="lb " style="left:1011.2px;top:122px;font-size:11px;line-height:12px;color:#6b6b6b;"><span style="letter-spacing:-0.25px">180</span></div>
<div class="lb " style="left:21.6px;top:144px;font-size:11px;line-height:12px;color:#6b6b6b;">0</div>
<div class="lb " style="left:21.6px;top:172px;font-size:11px;line-height:12px;color:#6b6b6b;">1</div>
<div class="lb " style="left:21.6px;top:181px;font-size:11px;line-height:12px;color:#6b6b6b;">0</div>
<div class="lb " style="left:21.6px;top:201px;font-size:11px;line-height:12px;color:#6b6b6b;">2</div>
<div class="lb " style="left:21.6px;top:210px;font-size:11px;line-height:12px;color:#6b6b6b;">0</div>
<div class="lb " style="left:21.6px;top:229px;font-size:11px;line-height:12px;color:#6b6b6b;">3</div>
<div class="lb " style="left:21.6px;top:238px;font-size:11px;line-height:12px;color:#6b6b6b;">0</div>
<div class="lb " style="left:21.6px;top:257px;font-size:11px;line-height:12px;color:#6b6b6b;">4</div>
<div class="lb " style="left:21.6px;top:266px;font-size:11px;line-height:12px;color:#6b6b6b;">0</div>
<div class="lb " style="left:21.6px;top:286px;font-size:11px;line-height:12px;color:#6b6b6b;">5</div>
<div class="lb " style="left:21.6px;top:295px;font-size:11px;line-height:12px;color:#6b6b6b;">0</div>
<div class="lb " style="left:21.6px;top:314px;font-size:11px;line-height:12px;color:#6b6b6b;">6</div>
<div class="lb " style="left:21.6px;top:323px;font-size:11px;line-height:12px;color:#6b6b6b;">0</div>
<div class="lb " style="left:21.6px;top:342px;font-size:11px;line-height:12px;color:#6b6b6b;">7</div>
<div class="lb " style="left:21.6px;top:351px;font-size:11px;line-height:12px;color:#6b6b6b;">0</div>
<div class="lb " style="left:21.6px;top:371px;font-size:11px;line-height:12px;color:#6b6b6b;">8</div>
<div class="lb " style="left:21.6px;top:380px;font-size:11px;line-height:12px;color:#6b6b6b;">0</div>
<div class="lb " style="left:21.6px;top:399px;font-size:11px;line-height:12px;color:#6b6b6b;">9</div>
<div class="lb " style="left:21.6px;top:408px;font-size:11px;line-height:12px;color:#6b6b6b;">0</div>
<div class="lb " style="left:21.6px;top:427px;font-size:11px;line-height:12px;color:#6b6b6b;">1</div>
<div class="lb " style="left:21.6px;top:436px;font-size:11px;line-height:12px;color:#6b6b6b;">0</div>
<div class="lb " style="left:21.6px;top:445px;font-size:11px;line-height:12px;color:#6b6b6b;">0</div>
<div class="lb " style="left:21.6px;top:456px;font-size:11px;line-height:12px;color:#6b6b6b;">1</div>
<div class="lb " style="left:21.6px;top:465px;font-size:11px;line-height:12px;color:#6b6b6b;">1</div>
<div class="lb " style="left:21.6px;top:474px;font-size:11px;line-height:12px;color:#6b6b6b;">0</div>
<div class="lb " style="left:21.6px;top:484px;font-size:11px;line-height:12px;color:#6b6b6b;">1</div>
<div class="lb " style="left:21.6px;top:493px;font-size:11px;line-height:12px;color:#6b6b6b;">2</div>
<div class="lb " style="left:21.6px;top:502px;font-size:11px;line-height:12px;color:#6b6b6b;">0</div>
<div class="lb " style="left:21.6px;top:512px;font-size:11px;line-height:12px;color:#6b6b6b;">1</div>
<div class="lb " style="left:21.6px;top:521px;font-size:11px;line-height:12px;color:#6b6b6b;">3</div>
<div class="lb " style="left:21.6px;top:530px;font-size:11px;line-height:12px;color:#6b6b6b;">0</div>
<div class="lb " style="left:21.6px;top:541px;font-size:11px;line-height:12px;color:#6b6b6b;">1</div>
<div class="lb " style="left:21.6px;top:550px;font-size:11px;line-height:12px;color:#6b6b6b;">4</div>
<div class="lb " style="left:21.6px;top:559px;font-size:11px;line-height:12px;color:#6b6b6b;">0</div>
<div class="lb " style="left:21.6px;top:569px;font-size:11px;line-height:12px;color:#6b6b6b;">1</div>
<div class="lb " style="left:21.6px;top:578px;font-size:11px;line-height:12px;color:#6b6b6b;">5</div>
<div class="lb " style="left:21.6px;top:587px;font-size:11px;line-height:12px;color:#6b6b6b;">0</div>
<div class="lb " style="left:21.6px;top:598px;font-size:11px;line-height:12px;color:#6b6b6b;">1</div>
<div class="lb " style="left:21.6px;top:607px;font-size:11px;line-height:12px;color:#6b6b6b;">6</div>
<div class="lb " style="left:21.6px;top:616px;font-size:11px;line-height:12px;color:#6b6b6b;">0</div>
<div class="lb " style="left:21.6px;top:626px;font-size:11px;line-height:12px;color:#6b6b6b;">1</div>
<div class="lb " style="left:21.6px;top:635px;font-size:11px;line-height:12px;color:#6b6b6b;">7</div>
<div class="lb " style="left:21.6px;top:644px;font-size:11px;line-height:12px;color:#6b6b6b;">0</div>
<div class="lb " style="left:21.6px;top:654px;font-size:11px;line-height:12px;color:#6b6b6b;">1</div>
<div class="lb " style="left:21.6px;top:663px;font-size:11px;line-height:12px;color:#6b6b6b;">8</div>
<div class="lb " style="left:21.6px;top:672px;font-size:11px;line-height:12px;color:#6b6b6b;">0</div>
<div class="" style="position:absolute;left:499px;top:143px;width:527px;height:514px;background:#1c1c1c"></div>
<div class="" style="position:absolute;left:500px;top:144px;width:526px;height:513px;background:#fff"></div>
<div class="" style="position:absolute;left:535px;top:179px;width:491px;height:1px;background:#b59db1"></div>
<div class="" style="position:absolute;left:535px;top:179px;width:1px;height:478px;background:#9a98b8"></div>
<div class="" style="position:absolute;left:642px;top:368px;width:212px;height:148px;border:1px solid #6d8db6;background:#fff"></div>
<div class="lb sf" style="left:643.2px;top:368.3px;font-size:11.85px;line-height:14px;color:#1d1d1d;">输入文字</div>
<svg style="position:absolute;left:0px;top:0px;overflow:hidden" width="17" height="657" viewBox="0 0 17 657"><path d="M-1 128.6 L4.6 133.3 H-1" fill="none" stroke="#c9c9c9" stroke-width="1.2"/><path d="M-1 152.6 L5.2 158 H-1Z" fill="#c9c9c9"/><path d="M-1 171.6 Q3.4 172 3.6 177.4" fill="none" stroke="#c9c9c9" stroke-width="1.3"/><path d="M1 177.6 L6.6 182.4 L1 185.8Z" fill="#c9c9c9"/><path d="M4.7 195V209H7V195Z" fill="#c9c9c9"/><path d="M-1 202H3" stroke="#c9c9c9" stroke-width="1.3"/><path d="M0.8 199.2 L4 202 L0.8 204.8Z" fill="#c9c9c9"/><path d="M3.9 223.8V232.5H-1" fill="none" stroke="#c9c9c9" stroke-width="1.5"/><path d="M-1 227.8H2M-1 230.2H2" stroke="#c9c9c9" stroke-width="1.1"/><path d="M10.3 232.9 V236.3 H6.9 Z" fill="#d6d6d6"/><rect x="-3" y="242" width="14.8" height="21.6" rx="2.2" fill="#1f1f1f"/><path d="M-1 247H4.2V249.9" fill="none" stroke="#dedede" stroke-width="1.7"/><path d="M-1 258.6H1" stroke="#dedede" stroke-width="1.4"/><path d="M10.3 258.9 V262.3 H6.9 Z" fill="#d6d6d6"/><path d="M5.2 270.2 L-1 276.4" stroke="#c9c9c9" stroke-width="1.3"/><path d="M-1 296.6 L2.2 293.9 L5.9 297.6 L2.7 300.6Z" fill="#c9c9c9"/><path d="M-1 300.4 L1.8 301.6 L0.4 305.4 L-1 305.6Z" fill="#c9c9c9"/><path d="M10.3 307.8 V311.2 H6.9 Z" fill="#d6d6d6"/><path d="M-1 320.2 L2.6 316.9 L6.1 320.6 L2.6 324 Z" fill="#c9c9c9"/><path d="M-1 322.4 L1.6 325 L-1 327.4Z" fill="#c9c9c9"/><path d="M10.3 331.7 V335.1 H6.9 Z" fill="#d6d6d6"/><path d="M-1 342.4 H2.6 L6 348.8 L2.6 355.3 H-1" fill="none" stroke="#c9c9c9" stroke-width="1.1"/><path d="M-1 345 L2.6 342.4M-1 352.6L2.6 355.3" stroke="#c9c9c9" stroke-width="0.9"/><path d="M10.3 355.6 V359 H6.9 Z" fill="#d6d6d6"/><ellipse cx="-0.5" cy="373" rx="7.1" ry="7" fill="#595959" stroke="#b4b4b4" stroke-width="1.1"/><path d="M10.3 379.7 V383.1 H6.9 Z" fill="#d6d6d6"/><path d="M-1 390.2H6M-1 395.6H6M3.5 390.2V395.6M-1 398.7H6M-1 403.6H6M3.5 398.7V403.6" fill="none" stroke="#c9c9c9" stroke-width="1.2"/><rect x="-2" y="413.4" width="8" height="14.6" fill="#c9c9c9"/><rect x="1.2" y="415.3" width="2.8" height="2.8" fill="#343434"/><rect x="1.2" y="419.3" width="2.8" height="2.8" fill="#343434"/><rect x="1.2" y="423.3" width="2.8" height="2.8" fill="#343434"/><rect x="1.2" y="427.1" width="2.8" height="1" fill="#343434"/><circle cx="3.8" cy="442.3" r="2.5" fill="none" stroke="#c9c9c9" stroke-width="1.2"/><circle cx="3.8" cy="453.2" r="2.5" fill="none" stroke="#c9c9c9" stroke-width="1.2"/><path d="M2.2 444.3 L-1 448.2 M2.2 451.2 L-1 447.4" stroke="#c9c9c9" stroke-width="1.2"/><path d="M-1 464.6H6.5V475.2H-1" fill="none" stroke="#c9c9c9" stroke-width="1.1"/><path d="M-1 470.6 L4 466.6M1.6 466.4H4.3V469.2" fill="none" stroke="#c9c9c9" stroke-width="1.1"/><path d="M10.3 478.9 V482.3 H6.9 Z" fill="#d6d6d6"/><defs><linearGradient id="gsw" x1="0" x2="1"><stop offset="0" stop-color="#8a8a8a"/><stop offset="1" stop-color="#dcdcdc"/></linearGradient><linearGradient id="gfe" x1="0" x2="0" y1="0" y2="1"><stop offset="0" stop-color="#bdbdbd"/><stop offset="1" stop-color="#2c2c2c"/></linearGradient></defs><rect x="-8" y="489" width="14" height="13.8" fill="url(#gsw)"/><rect x="-2" y="513.4" width="7.6" height="13" fill="url(#gfe)" stroke="#c9c9c9" stroke-width="1.1"/><path d="M3.4 514.6h1.4v1.6h-1.4zM3.4 518h1.4v1.6h-1.4zM3.4 521.6h1.4v1.6h-1.4z" fill="#5b5b5b"/><path d="M-1 540.2H5V550H1.2L0.8 550.4 L-1 553.6Z" fill="#d0d0d0"/><path d="M-1 543.4H2.6M-1 546.2H2.6" stroke="#4a4a4a" stroke-width="1.1"/><path d="M0.8 550.4H5L1 554Z" fill="#d0d0d0"/><path d="M-1 568.5 L3.2 564.2 Q5.6 563.2 5.8 565.6 L2.6 570.4 L-1 572.4Z" fill="#bdbdbd"/><path d="M10.3 578.4 V581.8 H6.9 Z" fill="#d6d6d6"/><path d="M-1 592 L0.9 588.2 L2.2 593.6 L4.6 590.8 L5.6 591.6 L1.8 600.5 H-1Z" fill="#c4c4c4"/><path d="M-1 612.6 Q1.9 613.6 1.6 617.2 Q1.2 619.6 -1 620" fill="none" stroke="#c9c9c9" stroke-width="1.2"/><path d="M0.4 620.4 L5.8 626.6" stroke="#c9c9c9" stroke-width="1.5"/><path d="M4.2 641.2 Q9.4 641.2 9.9 647" fill="none" stroke="#c9c9c9" stroke-width="1.6"/><path d="M1.9 641.2 L5.2 638 V644.4Z" fill="#c9c9c9"/><path d="M7 645.4 H12.8 L9.9 649.3Z" fill="#c9c9c9"/><rect x="-2" y="654" width="5" height="4" fill="#fff"/></svg>
<svg style="position:absolute;left:860px;top:600px;opacity:0.96" width="60" height="54" viewBox="860 600 60 54"><defs><linearGradient id="wb" x1="0" y1="1" x2="1" y2="0"><stop offset="0" stop-color="#5a8fd2"/><stop offset="0.55" stop-color="#62aee6"/><stop offset="1" stop-color="#86d0f4"/></linearGradient><linearGradient id="wg" x1="1" y1="0" x2="0" y2="1"><stop offset="0" stop-color="#56c67c"/><stop offset="0.5" stop-color="#86d468"/><stop offset="0.85" stop-color="#dfe862"/><stop offset="1" stop-color="#f4ee78"/></linearGradient></defs><path d="M909.3 607.6 C894 608.2 876 614.5 869.4 625.5 C864.6 633.6 868 639.4 876.4 639 C884 638.6 891 635.6 891.4 631 C891.6 628 886 627.2 880.4 630.2 C884.4 629.8 887.4 630.6 886.6 632.4 C885.4 635 879.6 636.2 876.6 635.2 C872.6 633.8 873.4 628.6 877.6 624 C883.6 617.4 895 611.6 909.3 607.6Z" fill="url(#wb)"/><path d="M893 610.8 C883 614 875.4 619.6 872.4 626.8 C870.6 631.4 871.6 635 874.4 637 C872.6 633.4 873 629 875.2 625 C878.6 618.8 885 614.2 893 610.8Z" fill="#fff" opacity="0.6"/><path d="M880.4 629.9 C886 624.4 894 621.7 901 621.9 C906.6 622.1 909.2 624.5 908.3 628.2 C907 634.2 898 640.6 888 643.6 C881 645.7 874 646.5 870.2 646.3 C876 644.6 884 642 890 637.4 C896 632.9 900.6 628.4 899.6 626.1 C898.6 623.9 890 625 880.4 629.9Z" fill="url(#wg)"/></svg>
<div class="lb " style="left:909.9px;top:608.2px;font-size:21px;line-height:23px;color:#6a9fd4;font-weight:bold;">极光下载站</div>
<div class="lb " style="left:911px;top:631.6px;font-size:16px;line-height:17px;color:#6bc48c;-webkit-text-stroke:0.35px #6bc48c;"><span style="letter-spacing:0.4px">www.xz7.com</span></div></div></body></html>
